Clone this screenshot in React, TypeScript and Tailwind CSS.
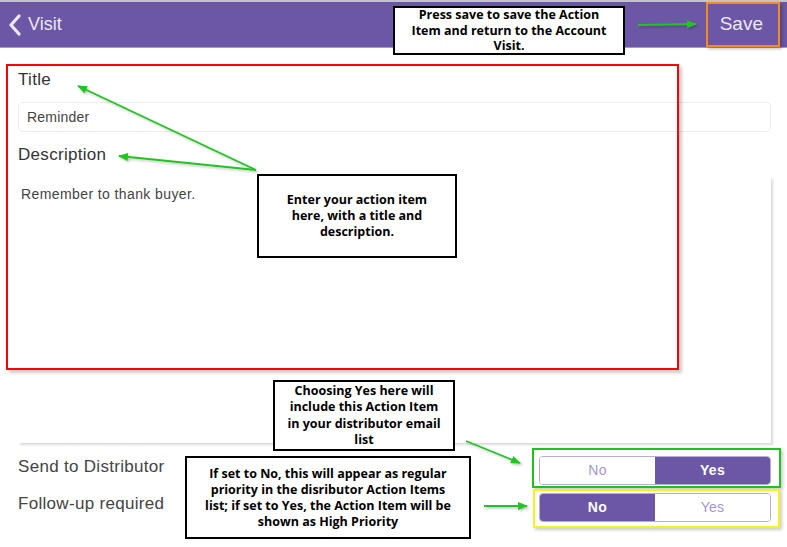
import React from "react";

const app = { fontFamily: '"Liberation Sans", Arial, sans-serif' };
const note = { fontFamily: '"Open Sans", Lato, sans-serif' };

function Segment({ yes }: { yes: boolean }) {
  return (
    <div className="flex w-[232px] h-[29px] rounded-[4px] border border-[#b7acd9] overflow-hidden text-[14px] tracking-[0.3px]">
      <div
        className={
          yes
            ? "flex-1 flex items-center justify-center bg-white text-[#a397cf]"
            : "flex-1 flex items-center justify-center bg-[#6c56a6] text-white font-bold"
        }
      >
        No
      </div>
      <div
        className={
          yes
            ? "flex-1 flex items-center justify-center bg-[#6c56a6] text-white font-bold"
            : "flex-1 flex items-center justify-center bg-white text-[#a397cf]"
        }
      >
        Yes
      </div>
    </div>
  );
}

function Arrows() {
  return (
    <svg className="absolute inset-0 pointer-events-none" width="787" height="547">
      <defs>
        <marker id="h" markerWidth="10" markerHeight="8" refX="9" refY="4" orient="auto" markerUnits="userSpaceOnUse">
          <path d="M0 0 L10 4 L0 8 Z" fill="#22c322" />
        </marker>
        <filter id="s" x="-10%" y="-10%" width="130%" height="130%">
          <feDropShadow dx="1.5" dy="1.5" stdDeviation="0.8" floodColor="#000" floodOpacity="0.25" />
        </filter>
      </defs>
      <g stroke="#22c322" strokeWidth="1.8" fill="none" filter="url(#s)">
        <line x1="638" y1="25" x2="696" y2="24" markerEnd="url(#h)" />
        <line x1="256" y1="170" x2="78" y2="86" markerEnd="url(#h)" />
        <line x1="256" y1="170" x2="119" y2="156" markerEnd="url(#h)" />
        <line x1="466" y1="441" x2="520" y2="463" markerEnd="url(#h)" />
        <line x1="484" y1="506" x2="527" y2="506" markerEnd="url(#h)" />
      </g>
    </svg>
  );
}

export default function App() {
  return (
    <div className="relative w-[787px] h-[547px] bg-white overflow-hidden" style={app}>
      {/* header */}
      <header className="h-[48px] border-t-2 border-[#c4c4c4] bg-[#6c56a6] border-b border-b-[#a596cc] flex items-center justify-between pl-[8px] pr-[24px] text-[#ece8f5]">
        <div className="flex items-center gap-[6px]">
          <svg width="14" height="22" viewBox="0 0 14 22">
            <path d="M11 2 L3 11 L11 20" stroke="#ece8f5" strokeWidth="3.2" fill="none" strokeLinecap="round" strokeLinejoin="round" />
          </svg>
          <span className="text-[18px]">Visit</span>
        </div>
        <span className="text-[19px]">Save</span>
      </header>

      {/* form */}
      <main className="pl-[18px] pr-[16px] pt-[22px] text-[#333]">
        <div className="text-[17px] leading-5 tracking-[0.3px]">Title</div>
        <div className="mt-[12px] h-[30px] rounded-[5px] border border-[#ececec] flex items-center px-[8px] text-[14px] tracking-[0.2px] text-[#444]">
          Reminder
        </div>
        <div className="mt-[13px] text-[17px] leading-5 tracking-[0.3px]">Description</div>
        <div className="mt-[12px] h-[266px] shadow-[2px_2px_2px_rgba(0,0,0,0.14)] pt-[7px] pl-[3px] text-[14px] tracking-[0.4px] text-[#444]">
          Remember to thank buyer.
        </div>
        <div className="mt-[13px] flex items-center justify-between h-[29px]">
          <span className="text-[17px] tracking-[0.3px] text-[#444] pb-[8px]">Send to Distributor</span>
          <Segment yes={true} />
        </div>
        <div className="mt-[8px] flex items-center justify-between h-[29px]">
          <span className="text-[17px] tracking-[0.3px] text-[#444] pb-[8px]">Follow-up required</span>
          <Segment yes={false} />
        </div>
      </main>

      {/* annotation frames */}
      <div className="absolute left-[6px] top-[64px] w-[673px] h-[306px] border-2 border-[#f00] shadow-[3px_3px_3px_rgba(0,0,0,0.2)]" />
      <div className="absolute left-[706px] top-[2px] w-[74px] h-[45px] border-2 border-[#f28c1e] shadow-[2px_2px_3px_rgba(0,0,0,0.25)]" />
      <div className="absolute left-[532px] top-[448px] w-[249px] h-[40px] border-2 border-[#1cc41c] shadow-[2px_2px_3px_rgba(0,0,0,0.2)]" />
      <div className="absolute left-[533px] top-[489px] w-[247px] h-[39px] border-2 border-[#f4f41c] shadow-[2px_2px_3px_rgba(0,0,0,0.2)]" />

      <Arrows />

      {/* callouts */}
      <div className="absolute left-[393px] top-[6px] w-[232px] h-[49px] border-2 border-black bg-white flex items-center justify-center text-center text-[12.5px] leading-[15.5px] font-bold text-black" style={note}>
        Press save to save the Action<br />Item and return to the Account<br />Visit.
      </div>
      <div className="absolute left-[257px] top-[174px] w-[200px] h-[84px] border-2 border-black bg-white flex items-center justify-center text-center text-[12.5px] leading-[16px] font-bold text-black" style={note}>
        Enter your action item<br />here, with a title and<br />description.
      </div>
      <div className="absolute left-[273px] top-[380px] w-[182px] h-[71px] border-2 border-black bg-white flex items-center justify-center text-center text-[12.5px] leading-[16.5px] font-bold text-black" style={note}>
        Choosing Yes here will<br />include this Action Item<br />in your distributor email<br />list
      </div>
      <div className="absolute left-[185px] top-[456px] w-[286px] h-[83px] border-2 border-black bg-white flex items-center justify-center text-center text-[12.5px] leading-[16px] font-bold text-black" style={note}>
        If set to No, this will appear as regular<br />priority in the disributor Action Items<br />list; if set to Yes, the Action Item will be<br />shown as High Priority
      </div>
    </div>
  );
}
